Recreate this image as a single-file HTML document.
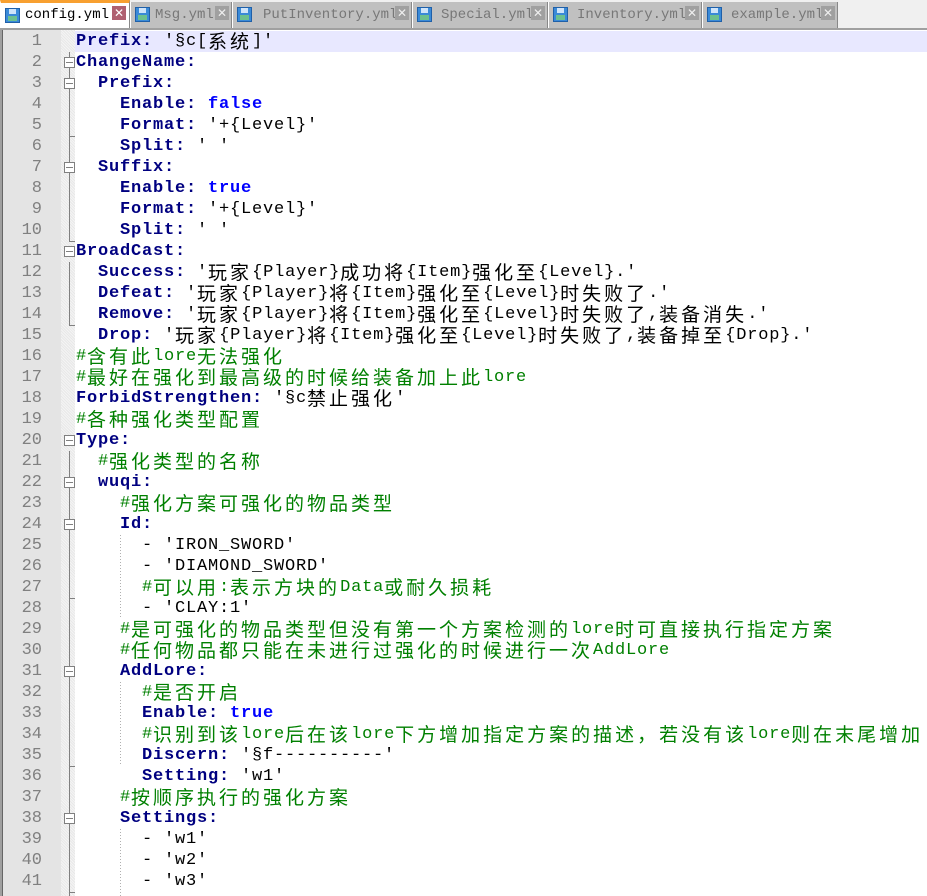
<!DOCTYPE html>
<html><head><meta charset="utf-8"><style>
body{margin:0;width:927px;height:896px;overflow:hidden;background:#fff;position:relative;font-family:"Liberation Mono","Noto Sans CJK SC",monospace;}
.bar{position:absolute;left:0;top:0;width:927px;height:28px;background:#f0f0f0;}
.tab{position:absolute;top:2px;height:26px;background:#c0c0c0;border-right:1px solid #888;border-left:1px solid #fff;box-sizing:border-box;font:14px "Liberation Mono",monospace;color:#777;line-height:26px;}
.tab.act{top:0;height:29px;background:#fff;border-top:3px solid #f8a030;color:#000;line-height:24px;}
.ic{position:absolute;left:4px;top:5px;width:15px;height:15px;background:#3a8ad8;border:1px solid #2060a8;box-sizing:border-box;}
.ic:before{content:"";position:absolute;left:3px;top:0;width:7px;height:5px;background:#cfe4fa;}
.ic:after{content:"";position:absolute;left:2px;bottom:1px;width:9px;height:5px;background:#6cc090;}
.x{position:absolute;top:4px;width:14px;height:14px;background:#a0a0a0;color:#eee;font:bold 12px/14px "DejaVu Sans",sans-serif;text-align:center;}
.act .x{background:#b06070;color:#fff;top:3px;}
.tn{position:absolute;left:24px;}
.sep{position:absolute;left:0;top:28px;width:927px;height:2px;background:#a0a0a0;}
.ln{position:absolute;left:3px;top:30px;width:58px;height:866px;background:#e4e4e4;}
.lb{position:absolute;left:0;top:30px;width:3px;height:866px;background:#a0a0a0;border-right:1px solid #666;box-sizing:border-box;}
.fm{position:absolute;left:61px;top:30px;width:14px;height:866px;background:repeating-linear-gradient(45deg,#f4f4f4 0 1px,#e8e8e8 1px 2px);}
.hl{position:absolute;left:75px;top:31px;width:852px;height:21px;background:#e8e8ff;}
.nums{position:absolute;left:0;top:31px;width:42px;text-align:right;color:#808080;font-family:"Liberation Mono",monospace;font-size:17px;}
.nums div,.code div{height:21px;line-height:21px;white-space:pre;overflow:visible;}
.code{position:absolute;left:76px;top:31px;font-family:"Liberation Mono",monospace;font-size:17px;letter-spacing:0.8px;color:#000;}
.k{color:#000080;font-weight:bold;}
.b{color:#0000ff;font-weight:bold;}
.c{color:#008000;}
.z{font-family:"Noto Sans CJK SC",sans-serif;letter-spacing:3px;font-size:19px;font-weight:normal;line-height:19px;vertical-align:top;display:inline-block;height:21px;padding-top:0;}
svg{position:absolute;left:0;top:0;}
</style></head><body>
<div class="bar"></div>
<div class="tab act" style="left:0;width:130px"><span class="ic"></span><span class="tn">config.yml</span><span class="x" style="left:111px">✕</span></div>
<div class="tab" style="left:130px;width:102px"><span class="ic"></span><span class="tn">Msg.yml</span><span class="x" style="left:84px">✕</span></div>
<div class="tab" style="left:232px;width:180px"><span class="ic"></span><span class="tn" style="left:30px">PutInventory.yml</span><span class="x" style="left:162px">✕</span></div>
<div class="tab" style="left:412px;width:136px"><span class="ic"></span><span class="tn" style="left:28px">Special.yml</span><span class="x" style="left:118px">✕</span></div>
<div class="tab" style="left:548px;width:154px"><span class="ic"></span><span class="tn" style="left:28px">Inventory.yml</span><span class="x" style="left:136px">✕</span></div>
<div class="tab" style="left:702px;width:136px"><span class="ic"></span><span class="tn" style="left:28px">example.yml</span><span class="x" style="left:118px">✕</span></div>
<div class="sep"></div>
<div class="lb"></div><div class="ln"></div><div class="fm"></div><div class="hl"></div>
<div class="nums">
<div>1</div><div>2</div><div>3</div><div>4</div><div>5</div><div>6</div><div>7</div><div>8</div><div>9</div><div>10</div><div>11</div><div>12</div><div>13</div><div>14</div><div>15</div><div>16</div><div>17</div><div>18</div><div>19</div><div>20</div><div>21</div><div>22</div><div>23</div><div>24</div><div>25</div><div>26</div><div>27</div><div>28</div><div>29</div><div>30</div><div>31</div><div>32</div><div>33</div><div>34</div><div>35</div><div>36</div><div>37</div><div>38</div><div>39</div><div>40</div><div>41</div>
</div>
<svg width="927" height="896">
<g stroke="#808080" fill="#fff" stroke-width="1">
<path d="M69.5 52V241.5H75 M69.5 136.5H75 M69.5 262V325.5H75 M69.5 451V896 M69.5 598.5H75 M69.5 766.5H75 M69.5 892.5H75" fill="none"/>
<rect x="64.5" y="57.5" width="10" height="10"/><rect x="64.5" y="78.5" width="10" height="10"/><rect x="64.5" y="162.5" width="10" height="10"/><rect x="64.5" y="246.5" width="10" height="10"/><rect x="64.5" y="435.5" width="10" height="10"/><rect x="64.5" y="477.5" width="10" height="10"/><rect x="64.5" y="519.5" width="10" height="10"/><rect x="64.5" y="666.5" width="10" height="10"/><rect x="64.5" y="813.5" width="10" height="10"/>
<path d="M66 62.5h7 M66 83.5h7 M66 167.5h7 M66 251.5h7 M66 440.5h7 M66 482.5h7 M66 524.5h7 M66 671.5h7 M66 818.5h7" fill="none"/>
</g>
<g stroke="#b0b0b0" stroke-dasharray="1 2" fill="none">
<path d="M120.5 535V619 M120.5 682V766 M120.5 829V896"/>
</g>
</svg>
<div class="code">
<div><span class="k">Prefix:</span> '§c[<span class="z">系统</span>]'</div>
<div><span class="k">ChangeName:</span></div>
<div>  <span class="k">Prefix:</span></div>
<div>    <span class="k">Enable:</span> <span class="b">false</span></div>
<div>    <span class="k">Format:</span> '+{Level}'</div>
<div>    <span class="k">Split:</span> ' '</div>
<div>  <span class="k">Suffix:</span></div>
<div>    <span class="k">Enable:</span> <span class="b">true</span></div>
<div>    <span class="k">Format:</span> '+{Level}'</div>
<div>    <span class="k">Split:</span> ' '</div>
<div><span class="k">BroadCast:</span></div>
<div>  <span class="k">Success:</span> '<span class="z">玩家</span>{Player}<span class="z">成功将</span>{Item}<span class="z">强化至</span>{Level}.'</div>
<div>  <span class="k">Defeat:</span> '<span class="z">玩家</span>{Player}<span class="z">将</span>{Item}<span class="z">强化至</span>{Level}<span class="z">时失败了</span>.'</div>
<div>  <span class="k">Remove:</span> '<span class="z">玩家</span>{Player}<span class="z">将</span>{Item}<span class="z">强化至</span>{Level}<span class="z">时失败了</span>,<span class="z">装备消失</span>.'</div>
<div>  <span class="k">Drop:</span> '<span class="z">玩家</span>{Player}<span class="z">将</span>{Item}<span class="z">强化至</span>{Level}<span class="z">时失败了</span>,<span class="z">装备掉至</span>{Drop}.'</div>
<div class="c">#<span class="z">含有此</span>lore<span class="z">无法强化</span></div>
<div class="c">#<span class="z">最好在强化到最高级的时候给装备加上此</span>lore</div>
<div><span class="k">ForbidStrengthen:</span> '§c<span class="z">禁止强化</span>'</div>
<div class="c">#<span class="z">各种强化类型配置</span></div>
<div><span class="k">Type:</span></div>
<div class="c">  #<span class="z">强化类型的名称</span></div>
<div>  <span class="k">wuqi:</span></div>
<div class="c">    #<span class="z">强化方案可强化的物品类型</span></div>
<div>    <span class="k">Id:</span></div>
<div>      - 'IRON_SWORD'</div>
<div>      - 'DIAMOND_SWORD'</div>
<div class="c">      #<span class="z">可以用</span>:<span class="z">表示方块的</span>Data<span class="z">或耐久损耗</span></div>
<div>      - 'CLAY:1'</div>
<div class="c">    #<span class="z">是可强化的物品类型但没有第一个方案检测的</span>lore<span class="z">时可直接执行指定方案</span></div>
<div class="c">    #<span class="z">任何物品都只能在未进行过强化的时候进行一次</span>AddLore</div>
<div>    <span class="k">AddLore:</span></div>
<div class="c">      #<span class="z">是否开启</span></div>
<div>      <span class="k">Enable:</span> <span class="b">true</span></div>
<div class="c">      #<span class="z">识别到该</span>lore<span class="z">后在该</span>lore<span class="z">下方增加指定方案的描述，若没有该</span>lore<span class="z">则在末尾增加</span></div>
<div>      <span class="k">Discern:</span> '§f----------'</div>
<div>      <span class="k">Setting:</span> 'w1'</div>
<div class="c">    #<span class="z">按顺序执行的强化方案</span></div>
<div>    <span class="k">Settings:</span></div>
<div>      - 'w1'</div>
<div>      - 'w2'</div>
<div>      - 'w3'</div>
</div>
</body></html>
